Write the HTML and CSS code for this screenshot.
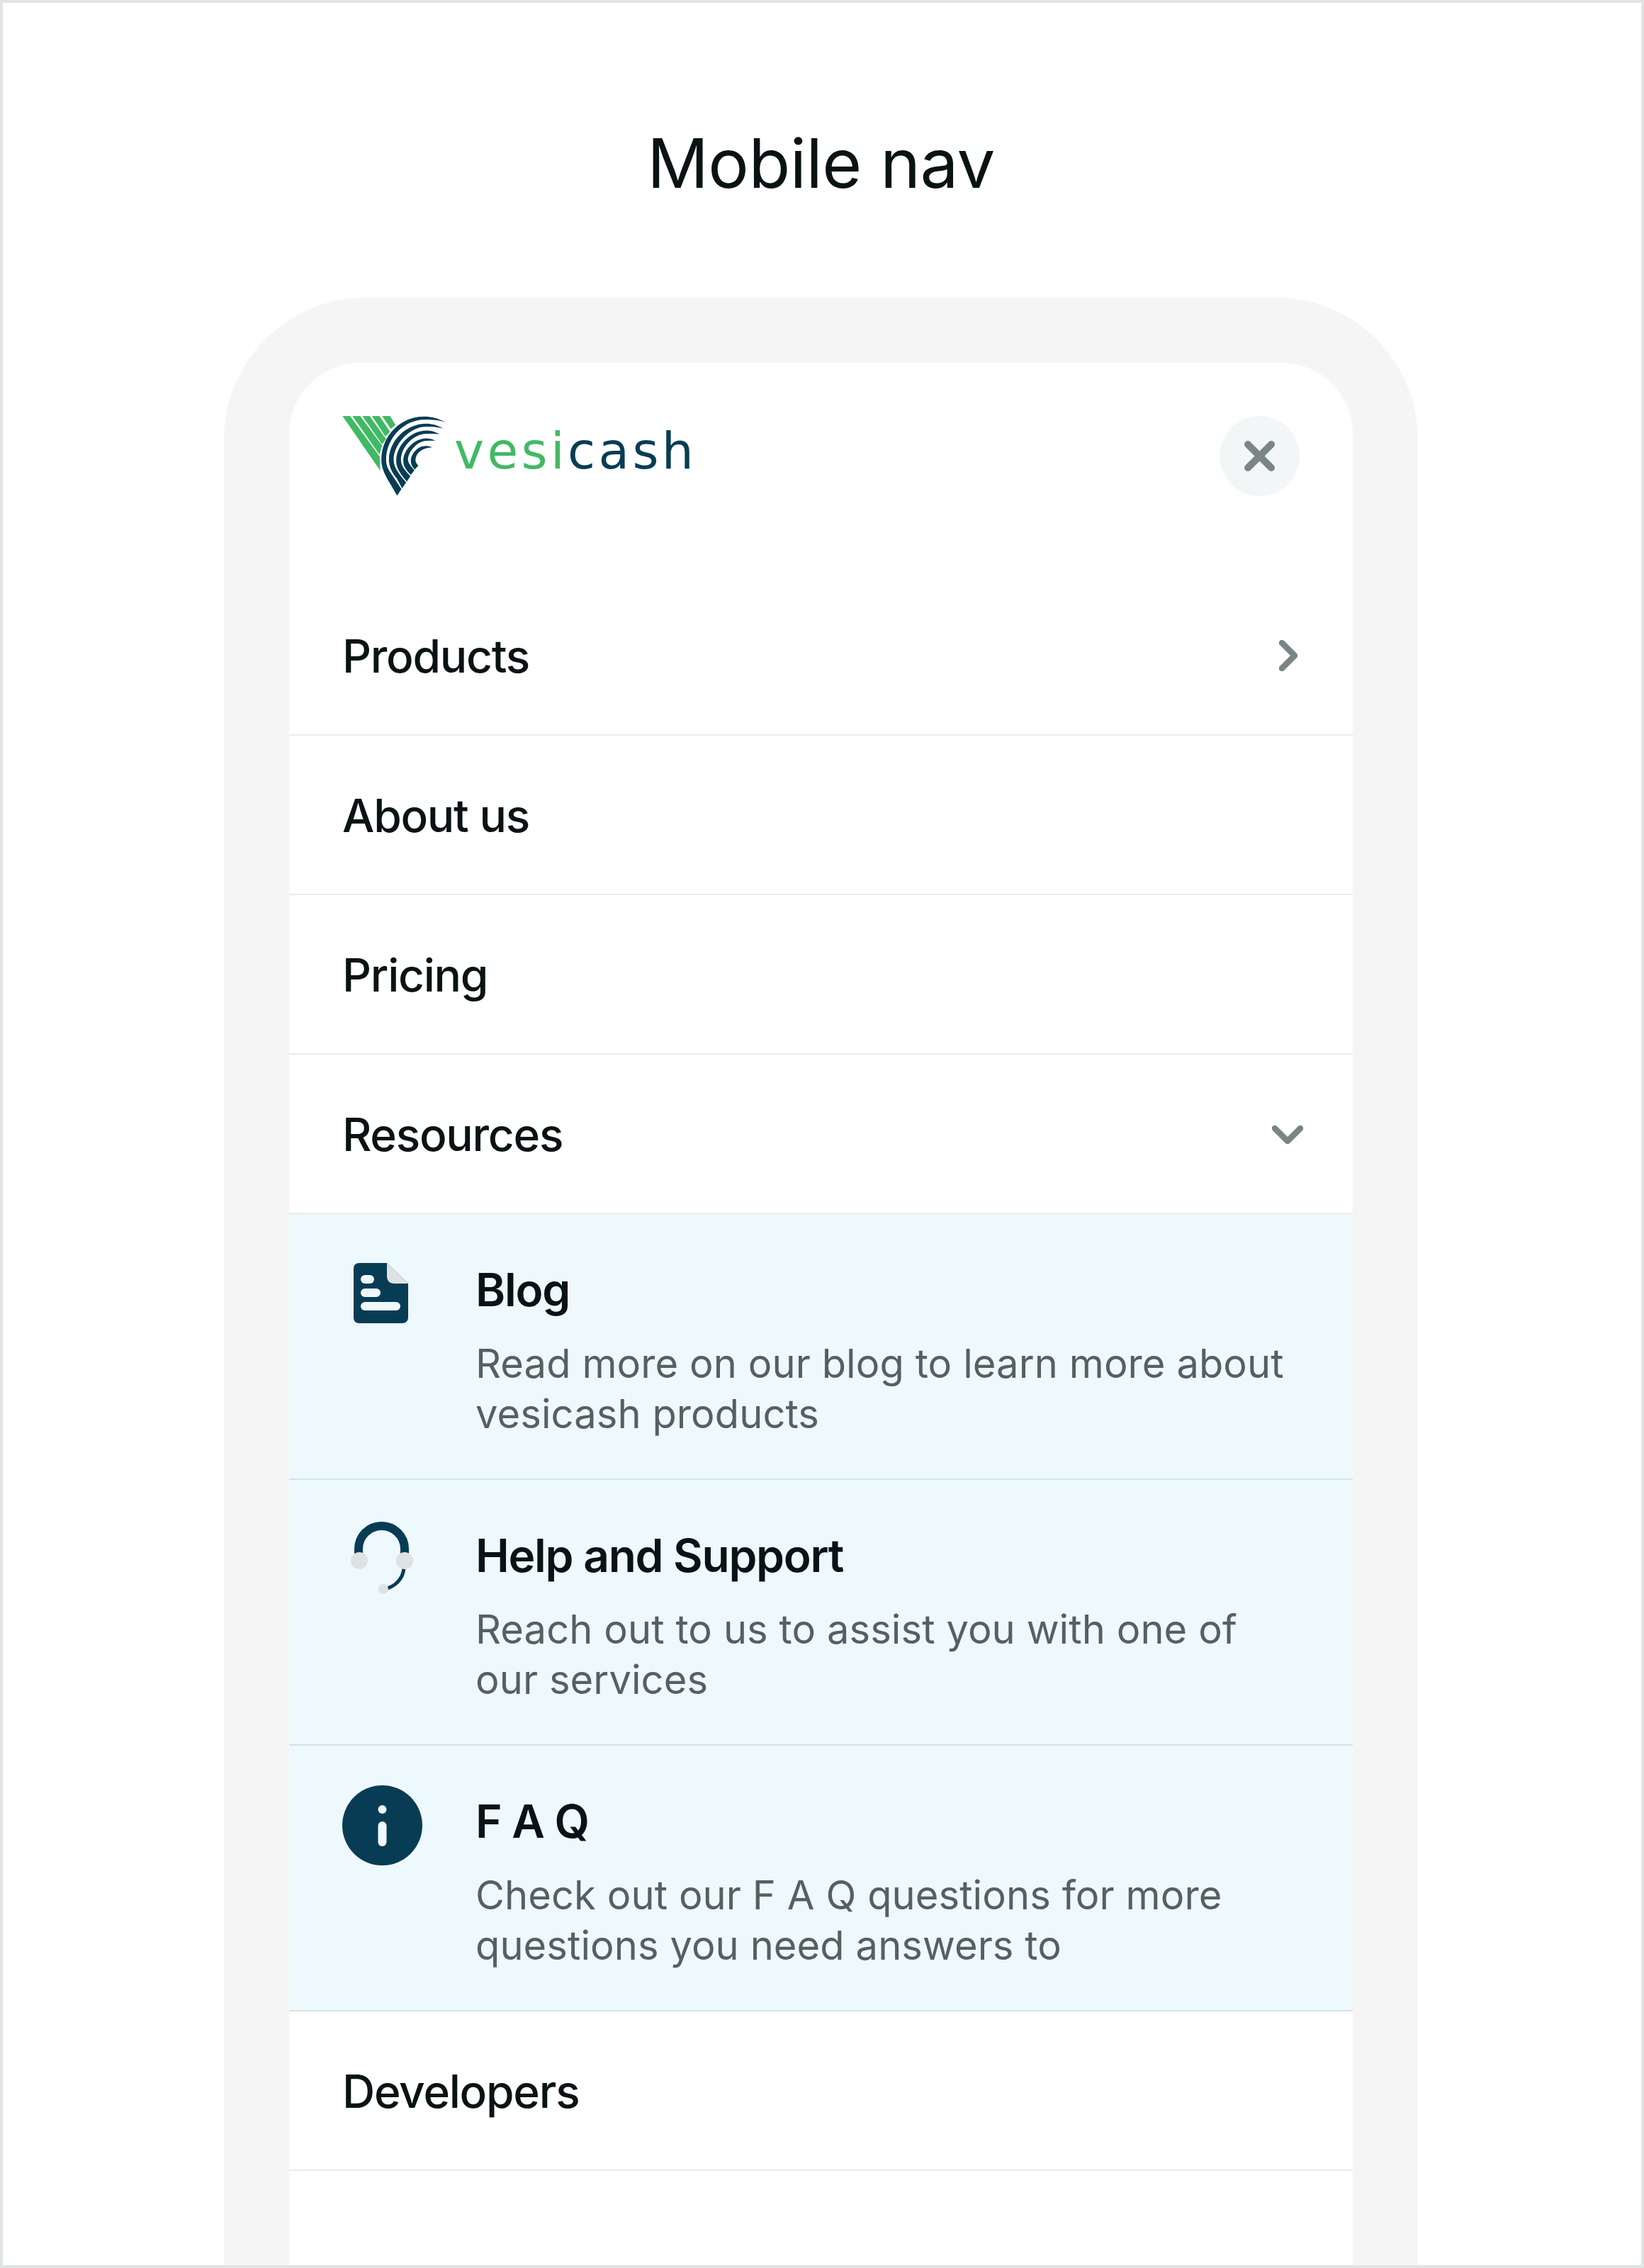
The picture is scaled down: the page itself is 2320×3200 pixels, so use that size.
FILE: index.html
```html
<!DOCTYPE html>
<html lang="en">
<head>
    <meta charset="UTF-8">
    <meta name="viewport" content="width=device-width, initial-scale=1.0">
    <title>Mobile nav</title>
    <link rel="stylesheet" href="styles.css">
</head>
<body>
    <div class="page">
        <h1>Mobile nav</h1>
        <div class="phone">
            <div class="screen">
                <!-- Header -->
                <div class="header">
                    <div class="logo">
                        <svg class="logo-mark" viewBox="40 50 440 340">
                            <g fill="#41b964">
                                <polygon points="40,50 72,50 198,222 200,282"/>
                                <polygon points="82,50 115,50 208,175 197,214"/>
                                <polygon points="124,50 155,50 225,148 208,170"/>
                                <polygon points="165,50 197,50 242,117 222,137"/>
                                <polygon points="208,50 242,50 265,88 245,105"/>
                            </g>
                            <g fill="#083c55">
                                <path d="M478 76C440 58 420 52 385 52C285 52 205 135 205 235C205 265 215 290 232 320L272 388L290 360L250 300C235 280 225 260 225 235C225 145 300 65 390 65C425 65 450 68 478 76Z"/>
                                <path d="M468 103C440 88 420 82 395 82C310 82 237 155 237 235C237 265 250 290 270 315L293 357L310 332C280 295 257 270 257 235C257 170 325 95 395 95C425 95 445 97 468 103Z"/>
                                <path d="M452 127C430 116 415 112 395 112C330 112 268 175 268 240C268 270 285 295 313 328L328 305C305 280 288 262 288 235C288 185 340 125 395 125C415 125 435 125 452 127Z"/>
                                <path d="M435 155C420 147 410 145 395 145C345 145 298 195 298 240C298 265 312 280 330 300L345 280C330 262 318 250 318 235C318 200 360 155 395 155C410 155 422 154 435 155Z"/>
                                <path d="M420 183C408 177 402 177 392 177C360 177 330 210 330 240C330 255 338 268 347 277L362 260C352 250 350 245 350 235C350 210 375 185 420 183Z"/>
                            </g>
                        </svg>
                        <span class="wordmark"><span class="green">vesi</span>cash</span>
                    </div>
                    <div class="close">
                        <svg viewBox="0 0 43 43" width="43" height="43"><path class="icon-line close-line" d="M5 5L38 38M38 5L5 38"/></svg>
                    </div>
                </div>

                <!-- Menu -->
                <div class="row">
                    <span>Products</span>
                    <svg class="chevron-right" viewBox="0 0 26 44" width="26" height="44"><path class="icon-line" d="M4 4L22 22L4 40"/></svg>
                </div>
                <div class="row"><span>About us</span></div>
                <div class="row"><span>Pricing</span></div>
                <div class="row">
                    <span>Resources</span>
                    <svg class="chevron-down" viewBox="0 0 44 26" width="44" height="26"><path class="icon-line" d="M4 4L22 22L40 4"/></svg>
                </div>

                <div class="sub-row">
                    <svg class="sub-icon" viewBox="0 0 113 113" width="113" height="113">
                        <path fill="#083c55" d="M24 13H63L93 42V90C93 95 89 98 85 98H24C19 98 16 95 16 90V21C16 16 19 13 24 13Z"/>
                        <path fill="#dfe2e3" d="M63 13L93 42H73C67 42 63 38 63 32Z"/>
                        <g fill="#eef9fd">
                            <rect x="26" y="30" width="19" height="12" rx="6"/>
                            <rect x="26" y="49" width="28" height="12" rx="6"/>
                            <rect x="26" y="68" width="56" height="12" rx="6"/>
                        </g>
                    </svg>
                    <div class="sub-text">
                        <div class="sub-title">Blog</div>
                        <div class="sub-desc">Read more on our blog to learn more about vesicash products</div>
                    </div>
                </div>
                <div class="sub-row">
                    <svg class="sub-icon" viewBox="0 0 113 113" width="113" height="113">
                        <path fill="none" stroke="#083c55" stroke-width="12" d="M23 50V41.5A32.5 32.5 0 0 1 88 41.5V50"/>
                        <path fill="none" stroke="#083c55" stroke-width="5" d="M87 68C86 84 74 95 60 98"/>
                        <circle fill="#dfe2e3" cx="24" cy="58" r="12"/>
                        <circle fill="#dfe2e3" cx="88" cy="58" r="12"/>
                        <circle fill="#dfe2e3" cx="58" cy="98" r="7"/>
                    </svg>
                    <div class="sub-text">
                        <div class="sub-title">Help and Support</div>
                        <div class="sub-desc">Reach out to us to assist you with one of our services</div>
                    </div>
                </div>
                <div class="sub-row">
                    <svg class="sub-icon" viewBox="0 0 113 113" width="113" height="113">
                        <circle fill="#083c55" cx="56.5" cy="56.5" r="56.5"/>
                        <circle fill="#eef9fd" cx="56.5" cy="34" r="6"/>
                        <rect fill="#eef9fd" x="50.5" y="51" width="12" height="35" rx="6"/>
                    </svg>
                    <div class="sub-text">
                        <div class="sub-title">F A Q</div>
                        <div class="sub-desc">Check out our F A Q questions for more questions you need answers to</div>
                    </div>
                </div>

                <div class="row"><span>Developers</span></div>
            </div>
        </div>
    </div>
</body>
</html>
```

FILE: styles.css
```css
html, body {
    margin: 0;
    padding: 0;
}

body {
    font-family: Inter, "Liberation Sans", sans-serif;
    background-color: #ffffff;
    color: #0a1314;
}

.page {
    box-sizing: border-box;
    width: 2320px;
    height: 3200px;
    border: 4px solid #e0e4e4;
    overflow: hidden;
}

h1 {
    margin: 0;
    padding: 168px 3px 0 0;
    height: 249px;
    box-sizing: border-box;
    text-align: center;
    font-size: 96px;
    line-height: 116px;
    font-weight: 400;
    letter-spacing: -0.5px;
}

.phone {
    box-sizing: border-box;
    width: 1685px;
    height: 2800px;
    margin: 167px 0 0 312px;
    padding: 92px 92px 0;
    background-color: #f5f5f5;
    border-radius: 200px 200px 0 0;
}

.screen {
    height: 100%;
    background-color: #ffffff;
    border-radius: 100px 100px 0 0;
}

.header {
    display: flex;
    justify-content: space-between;
    align-items: flex-start;
    padding: 75px 75px 0;
    height: 301px;
    box-sizing: border-box;
}

.logo {
    display: flex;
    gap: 11px;
}

.logo-mark {
    width: 147px;
    height: 113px;
}

.wordmark {
    margin-top: 8px;
    font-family: "DejaVu Sans", sans-serif;
    font-size: 71px;
    line-height: 84px;
    letter-spacing: 4.4px;
    color: #083c55;
}

.green {
    color: #41b964;
}

.close {
    display: flex;
    justify-content: center;
    align-items: center;
    width: 113px;
    height: 113px;
    border-radius: 50%;
    background-color: #f2f6f7;
}

.icon-line {
    fill: none;
    stroke: #7a8585;
    stroke-width: 8.5;
    stroke-linecap: round;
    stroke-linejoin: round;
}

.close-line {
    stroke-width: 10;
}

.row {
    display: flex;
    justify-content: space-between;
    align-items: center;
    box-sizing: border-box;
    height: 225px;
    padding: 2px 75px 0;
    border-bottom: 2px solid #e8ecec;
    font-size: 64px;
    font-weight: 500;
    letter-spacing: -1.25px;
}

.chevron-right {
    margin: -2px 3px 0 0;
}

.chevron-down {
    margin: 0 -5px 0 0;
}

.sub-row {
    display: flex;
    gap: 75px;
    box-sizing: border-box;
    height: 375px;
    padding: 56px 75px 0;
    background-color: #eef9fd;
    border-bottom: 2px solid #d5e2e6;
}

.sub-icon {
    flex-shrink: 0;
}

.sub-text {
    padding-top: 12px;
}

.sub-title {
    font-size: 64px;
    line-height: 78px;
    font-weight: 600;
    letter-spacing: -1.25px;
}

.sub-desc {
    margin-top: 30px;
    font-size: 56px;
    line-height: 71px;
    letter-spacing: 0.1px;
    color: #566060;
}
```
